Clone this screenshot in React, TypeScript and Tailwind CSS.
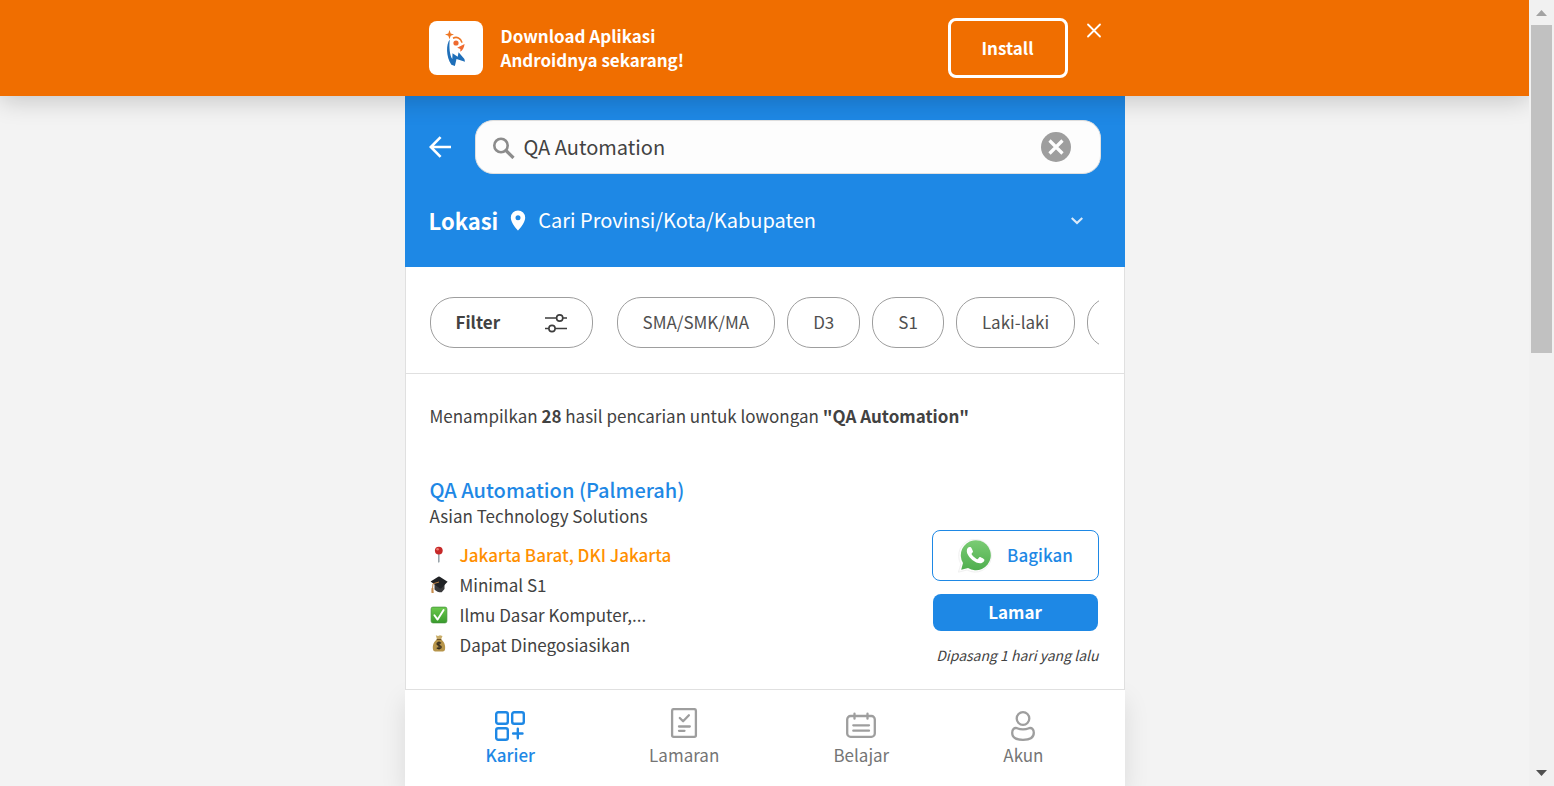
import { useState } from "react";
import type { ReactNode } from "react";

function Logo() {
  return (
    <svg viewBox="0 0 54 54" className="size-full" aria-hidden="true">
      <path d="M20.5 9 21.7 12.400 25 13.500 21.700 14.700 20.500 18.200 19.300 14.700 16 13.500 19.300 12.400Z" fill="#ee7623" />
      <path d="M24 17.200C27.500 15.400 32 16.800 33 21.600" fill="none" stroke="#ee7623" strokeWidth="1.700" />
      <circle cx="27" cy="22" r="2.600" fill="#ee6a30" />
      <path d="M35.600 23 28.200 26.800 31.400 28 31.300 30.800C33.600 29.200 35.200 26.600 35.600 23Z" fill="#ee6a30" />
      <path
        d="M20.800 18.600C17 23 16.800 35.600 22.400 43.800L25.900 45 27.500 38 36 40.800 35.400 38 29.600 31.300 28.700 35.800 23.500 32.200 23.300 38C20.700 35 19.900 25.400 20.800 18.600Z"
        fill="#1f6fb9"
      />
    </svg>
  );
}

function PushPin() {
  return (
    <svg viewBox="0 0 18 18" className="size-[18px]" aria-hidden="true">
      <path d="M8 8h1.600v7.600l-.8 1.600-.8-1.600z" fill="#9aa5ab" />
      <circle cx="8.800" cy="4.600" r="3.900" fill="#c62828" />
      <circle cx="7.600" cy="3.300" r="1.300" fill="#ef7b70" />
    </svg>
  );
}

function GraduationCap() {
  return (
    <svg viewBox="0 0 18 18" className="size-[18px]" aria-hidden="true">
      <path d="M4.500 8v5.400c2 2.400 5.200 3.200 7.200 2.900l2.800-3.400V7z" fill="#3a3a3c" />
      <path d="M.6 5.400 8.200.8q.8-.4 1.600 0l7.800 5-6.200 6.400q-.8.7-1.700.1z" fill="#202225" />
      <path d="m9 6-6 1.800-.7 7.800" fill="none" stroke="#b98045" strokeWidth="1" />
      <path d="m1.400 12.200 2-.2.300 5H1.500z" fill="#c88d4d" />
    </svg>
  );
}

function CheckMark() {
  return (
    <svg viewBox="0 0 18 18" className="size-[18px]" aria-hidden="true">
      <defs>
        <linearGradient id="check-fill" x1="0" y1="0" x2="0" y2="1">
          <stop offset="0" stopColor="#6cca4d" />
          <stop offset="1" stopColor="#399b2d" />
        </linearGradient>
      </defs>
      <rect x="1.100" y="1.100" width="15.800" height="15.800" rx="1.800" fill="url(#check-fill)" stroke="#3f8e36" strokeWidth=".7" />
      <path d="m4.400 9.200 3.200 4.400 6-9.600" fill="none" stroke="#fff" strokeWidth="1.900" strokeLinecap="round" strokeLinejoin="round" />
    </svg>
  );
}

function MoneyBag() {
  return (
    <svg viewBox="0 0 18 20" className="h-5 w-[18px]" aria-hidden="true">
      <path d="M5.800.3 8 .9l2-.6 2.500.8L11 4.500H7z" fill="#c9ad68" />
      <path d="M7 4.200C4 6.500 2.200 10 3 14.500q.3 2 2.200 2h7.600q1.900 0 2.200-2c.8-4.500-1-8-4-10.300z" fill="#b7954b" />
      <path d="M6.700 4.500h4.600" stroke="#6f5426" strokeWidth="1.100" />
      <path d="M11 8.200c-1-.9-4-.9-4 .8 0 2 4.200 1 4.200 3 0 1.800-3.200 1.800-4.400.7M9 6.500v8" fill="none" stroke="#31291c" strokeWidth="1.200" />
    </svg>
  );
}

function WhatsApp() {
  return (
    <svg viewBox="0 0 36 34" className="h-[34px] w-9" aria-hidden="true">
      <defs>
        <linearGradient id="wa-fill" x1="0" y1="0" x2="0" y2="1">
          <stop offset="0" stopColor="#7bcc74" />
          <stop offset="1" stopColor="#4fae4e" />
        </linearGradient>
      </defs>
      <path d="M1.400 33.200 3.900 25A16.400 16.400 0 1 1 10 31z" fill="#fdfdfd" stroke="#ededed" strokeWidth=".8" />
      <path d="M4.200 30.800 6 24a15 15 0 1 1 5 5z" fill="url(#wa-fill)" />
      <path
        d="M12.700 8.100c-1.500 0-2.900 1.600-2.900 4 0 3.200 2.800 6.600 5.500 8.900 3 2.400 6.600 3.800 8.900 3.200 2-.5 3.400-2 3.200-3.600-.1-.7-4-2.800-4.700-2.700-.8.1-1.600 2.300-2.400 2.300-1 0-5.700-3.800-5.800-5.100 0-.8 1.600-1.600 1.500-2.500-.1-.8-1.400-3.700-1.900-4.200-.3-.3-.8-.3-1.400-.3Z"
        fill="#fff"
      />
    </svg>
  );
}

function Sliders() {
  return (
    <svg viewBox="0 0 22 20" className="h-5 w-[22px]" fill="none" stroke="#3d3d3d" strokeWidth="1.600" aria-hidden="true">
      <path d="M0 5h11.500M18 5h4M0 15.500h4M10 15.500h12" />
      <circle cx="14.700" cy="5" r="3.100" />
      <circle cx="7" cy="15.500" r="3.100" />
    </svg>
  );
}

function KarierIcon() {
  return (
    <svg viewBox="0 0 30 30" className="size-[30px]" fill="none" stroke="currentColor" strokeWidth="2.400" strokeLinecap="round" aria-hidden="true">
      <rect x="1.200" y="1.200" width="11.600" height="11.600" rx="2" />
      <rect x="17.200" y="1.200" width="11.600" height="11.600" rx="2" />
      <rect x="1.200" y="17.200" width="11.600" height="11.600" rx="2" />
      <path d="M22.800 17.800v9.400M18.100 22.500h9.400" />
    </svg>
  );
}

function LamaranIcon() {
  return (
    <svg viewBox="0 3 30 36" className="h-9 w-[30px]" fill="none" stroke="currentColor" strokeWidth="2.300" strokeLinecap="round" strokeLinejoin="round" aria-hidden="true">
      <rect x="3.100" y="4.100" width="23.800" height="27.800" rx="1.600" />
      <path d="m10.800 13 3.300 3.300 5.800-6M10 21.500h10.800M10 25.800h5.500" />
    </svg>
  );
}

function BelajarIcon() {
  return (
    <svg viewBox="0 0 30 30" className="size-[30px]" fill="none" stroke="currentColor" strokeWidth="2.300" strokeLinecap="round" aria-hidden="true">
      <rect x="1.200" y="5" width="27.600" height="20.800" rx="3.400" />
      <path d="M8.500 2.700v5M21.500 2.700v5M7.300 14.300H23M7.300 19.700H23" />
    </svg>
  );
}

function AkunIcon() {
  return (
    <svg viewBox="0 0 30 30" className="size-[30px]" fill="none" stroke="currentColor" strokeWidth="2.300" aria-hidden="true">
      <circle cx="15" cy="7.500" r="6.300" />
      <path d="M9 17.200c3.700 1.500 8.300 1.500 12 0 2.800-.8 4.800 1 4.800 4.500 0 4.700-3.500 7.100-10.800 7.100S4.200 26.400 4.200 21.700c0-3.500 2-5.300 4.800-4.500Z" />
    </svg>
  );
}

const chips = ["SMA/SMK/MA", "D3", "S1", "Laki-laki", "Perempuan"];

const details: { icon: ReactNode; text: string; highlight?: boolean }[] = [
  { icon: <PushPin />, text: "Jakarta Barat, DKI Jakarta", highlight: true },
  { icon: <GraduationCap />, text: "Minimal S1" },
  { icon: <CheckMark />, text: "Ilmu Dasar Komputer,..." },
  { icon: <MoneyBag />, text: "Dapat Dinegosiasikan" },
];

const tabs: { icon: ReactNode; label: string; active?: boolean }[] = [
  { icon: <KarierIcon />, label: "Karier", active: true },
  { icon: <LamaranIcon />, label: "Lamaran" },
  { icon: <BelajarIcon />, label: "Belajar" },
  { icon: <AkunIcon />, label: "Akun" },
];

function InstallBanner() {
  return (
    <header className="relative z-10 shrink-0 bg-[#f06e00] shadow-[0_4px_24px_rgba(0,0,0,0.2)]">
      <div className="mx-auto flex h-24 max-w-[720px] items-center pr-[21px] pl-6 text-white">
        <div className="size-[54px] shrink-0 overflow-hidden rounded-lg bg-white">
          <Logo />
        </div>
        <p className="ml-[18px] flex-1 text-[17px] leading-6 font-bold">
          Download Aplikasi
          <br />
          Androidnya sekarang!
        </p>
        <button type="button" className="h-[60px] w-[120px] rounded-lg border-[3px] border-white text-[17px] font-bold">
          Install
        </button>
        <button type="button" aria-label="Tutup" className="mt-5 ml-4 self-start p-0.5">
          <svg viewBox="0 0 16 16" className="size-4" stroke="#fff" strokeWidth="1.800" strokeLinecap="round" aria-hidden="true">
            <path d="m2 2.500 12 12M14 2.500l-12 12" />
          </svg>
        </button>
      </div>
    </header>
  );
}

function SearchHeader() {
  const [query, setQuery] = useState("QA Automation");
  return (
    <section className="flex flex-col gap-6 bg-[#1e88e5] p-6 text-white">
      <div className="flex items-center">
        <a href="#kembali" aria-label="Kembali" className="mr-6 shrink-0">
          <svg viewBox="0 0 22 22" className="size-[22px]" fill="none" stroke="#fff" strokeWidth="2.600" aria-hidden="true">
            <path d="M22 11H2M11.600 1.200 1.800 11l9.800 9.800" />
          </svg>
        </a>
        <div className="flex h-[54px] flex-1 items-center rounded-[18px] border border-[#e0e0e0] bg-[#fdfdfd] pr-7 pl-4">
          <svg viewBox="0 0 24 24" className="size-6 shrink-0" fill="none" stroke="#8c8c8c" aria-hidden="true">
            <circle cx="9" cy="10.500" r="6.700" strokeWidth="2.600" />
            <path d="m14 15.500 7.500 7.500" strokeWidth="3.200" />
          </svg>
          <input
            aria-label="Cari lowongan"
            value={query}
            onChange={(event) => setQuery(event.target.value)}
            className="ml-2 h-10 min-w-0 flex-1 bg-transparent pb-0.5 text-xl text-[#424242] outline-none"
          />
          <button type="button" aria-label="Hapus pencarian" onClick={() => setQuery("")}>
            <svg viewBox="0 0 32 32" className="size-8" aria-hidden="true">
              <circle cx="16" cy="16" r="15" fill="#9e9e9e" />
              <path d="m9.500 9.500 13 13M22.500 9.500l-13 13" stroke="#fdfdfd" strokeWidth="3.200" />
            </svg>
          </button>
        </div>
      </div>
      <button type="button" className="flex h-[45px] items-center pr-[18px] text-left">
        <span className="pb-0.5 text-[22px] leading-8 font-bold">Lokasi</span>
        <svg viewBox="0 0 16 22" className="mx-3 h-[22px] w-4" aria-hidden="true">
          <path fillRule="evenodd" fill="#fff" d="M8 .5a7.200 7.200 0 0 0-7.200 7.200C.8 13 8 20.500 8 20.500s7.200-7.500 7.200-12.800A7.200 7.200 0 0 0 8 .5Zm0 4.700a2.500 2.500 0 1 1 0 5 2.500 2.500 0 0 1 0-5Z" />
        </svg>
        <span className="flex-1 pb-0.5 text-xl">Cari Provinsi/Kota/Kabupaten</span>
        <svg viewBox="0 0 12 8" className="h-2 w-3" fill="none" stroke="#d9eafa" strokeWidth="2.200" aria-hidden="true">
          <path d="m.7 1 5.300 5 5.300-5" />
        </svg>
      </button>
    </section>
  );
}

function Filters() {
  return (
    <section className="flex gap-6 border-b border-[#e0e0e0] pt-[30px] pr-[25px] pb-[25px] pl-6">
      <button type="button" className="flex h-[51px] w-[163px] shrink-0 items-center justify-between rounded-3xl border border-[#9e9e9e] px-[25px] text-[17px] font-bold">
        <span className="pb-0.5">Filter</span>
        <Sliders />
      </button>
      <div className="flex min-w-0 flex-1 gap-3 overflow-hidden">
        {chips.map((chip) => (
          <button key={chip} type="button" className="h-[51px] shrink-0 rounded-3xl border border-[#9e9e9e] px-[25px] pb-0.5 text-[17px] text-[#505050]">
            {chip}
          </button>
        ))}
      </div>
    </section>
  );
}

function JobCard() {
  return (
    <article className="flex items-end justify-between pt-12 pr-[25px] pb-[22px] pl-6">
      <div className="pb-[7px]">
        <h2 className="text-xl leading-7 font-medium text-[#1e88e5]">
          <a href="#lowongan">QA Automation (Palmerah)</a>
        </h2>
        <p className="text-[17px] leading-6">Asian Technology Solutions</p>
        <ul className="mt-3">
          {details.map(({ icon, text, highlight }) => (
            <li key={text} className="flex h-[30px] items-center gap-3">
              {icon}
              <span className={highlight ? "text-[17px] font-medium text-[#ff8f00]" : "text-[17px]"}>{text}</span>
            </li>
          ))}
        </ul>
      </div>
      <div className="flex w-[167px] flex-col">
        <button type="button" className="flex h-[51px] items-center justify-center gap-[14px] rounded-lg border border-[#1e88e5] text-[17px] font-medium text-[#1e88e5]">
          <WhatsApp />
          <span className="pb-0.5">Bagikan</span>
        </button>
        <button type="button" className="mx-px mt-[13px] h-[37px] rounded-lg bg-[#1e88e5] pb-0.5 text-[17px] font-bold text-white">
          Lamar
        </button>
        <p className="mt-3 text-right text-sm leading-6 whitespace-nowrap italic">Dipasang 1 hari yang lalu</p>
      </div>
    </article>
  );
}

function BottomNav() {
  return (
    <nav className="mx-auto flex h-24 w-full max-w-[720px] shrink-0 justify-around bg-white px-6 pt-[15px] shadow-[0_10px_24px_rgba(0,0,0,0.1)]">
      {tabs.map(({ icon, label, active }) => (
        <a
          key={label}
          href={`#${label.toLowerCase()}`}
          className={
            active
              ? "flex flex-col items-center text-[17px] leading-6 font-medium text-[#1e88e5]"
              : "flex flex-col items-center text-[17px] leading-6 text-[#757575]"
          }
        >
          <span className={active ? "flex h-[38px] items-center pt-1" : "flex h-[38px] items-center pt-1 text-[#9e9e9e]"}>{icon}</span>
          {label}
        </a>
      ))}
    </nav>
  );
}

function ScrollTrack() {
  return (
    <div aria-hidden="true" className="flex w-[25px] shrink-0 flex-col items-center bg-[#f1f1f1]">
      <svg viewBox="0 0 25 25" className="size-[25px]">
        <path d="M7 16h11l-5.500-6z" fill="#a3a3a3" />
      </svg>
      <div className="h-5/12 w-[21px] bg-[#c1c1c1]" />
      <svg viewBox="0 0 25 25" className="mt-auto size-[25px]">
        <path d="M7 9h11l-5.500 6z" fill="#505050" />
      </svg>
    </div>
  );
}

export default function App() {
  return (
    <div className="flex h-screen bg-[#f3f3f3] font-['Noto_Sans_CJK_JP',sans-serif] text-[#424242]">
      <div className="flex min-w-0 flex-1 flex-col overflow-hidden">
        <InstallBanner />
        <main className="relative mx-auto flex min-h-0 w-full max-w-[720px] flex-1 flex-col overflow-hidden">
          <SearchHeader />
          <div className="border-x border-b border-[#e0e0e0] bg-white">
            <Filters />
            <p className="pt-[30px] pr-[25px] pl-6 text-[17px] leading-6">
              Menampilkan <strong>28</strong> hasil pencarian untuk lowongan <strong>"QA Automation"</strong>
            </p>
            <JobCard />
          </div>
        </main>
        <BottomNav />
      </div>
      <ScrollTrack />
    </div>
  );
}
